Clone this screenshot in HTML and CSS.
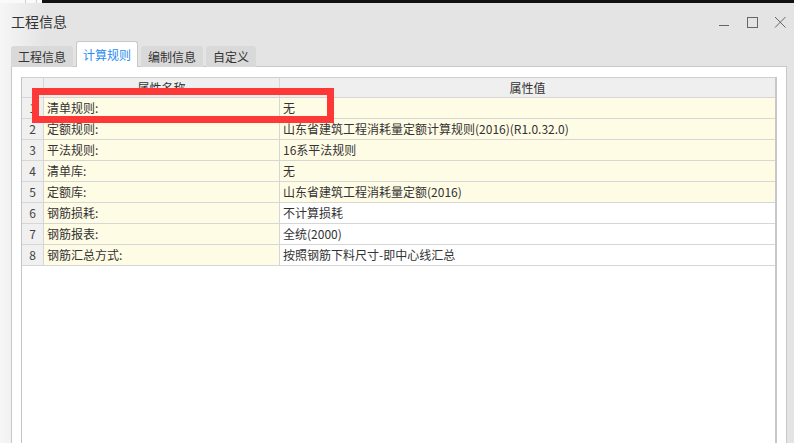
FILE: index.html
```html
<!DOCTYPE html>
<html lang="zh">
<head>
<meta charset="utf-8">
<link rel="stylesheet" href="styles.css">
</head>
<body>
<div class="window">
  <div class="topstrip"><div class="ts-left"><span class="ts-line l1"></span><span class="ts-line l2"></span></div><div class="ts-right"></div></div>
  <div class="titlebar">
    <div class="title">工程信息</div>
    <div class="controls">
      <svg class="ctl" width="12" height="12" viewBox="0 0 12 12"><path d="M1 9.5H11" stroke="#666" stroke-width="1" fill="none"/></svg>
      <svg class="ctl" width="12" height="12" viewBox="0 0 12 12"><rect x="1.5" y="1.5" width="10" height="10" stroke="#666" stroke-width="1" fill="none"/></svg>
      <svg class="ctl" width="12" height="12" viewBox="0 0 12 12"><path d="M1 1L11.5 11.5M11.5 1L1 11.5" stroke="#666" stroke-width="1" fill="none"/></svg>
    </div>
  </div>
  <div class="tabs">
    <div class="tab">工程信息</div>
    <div class="tab active">计算规则</div>
    <div class="tab">编制信息</div>
    <div class="tab">自定义</div>
  </div>
  <div class="panel">
    <div class="grid">
      <div class="row head">
        <div class="c num"></div>
        <div class="c name center">属性名称</div>
        <div class="c val center">属性值</div>
      </div>
      <div class="row y"><div class="c num">1</div><div class="c name">清单规则:</div><div class="c val">无</div></div>
      <div class="row y"><div class="c num">2</div><div class="c name">定额规则:</div><div class="c val">山东省建筑工程消耗量定额计算规则(2016)(R1.0.32.0)</div></div>
      <div class="row y"><div class="c num">3</div><div class="c name">平法规则:</div><div class="c val">16系平法规则</div></div>
      <div class="row y"><div class="c num">4</div><div class="c name">清单库:</div><div class="c val">无</div></div>
      <div class="row y"><div class="c num">5</div><div class="c name">定额库:</div><div class="c val">山东省建筑工程消耗量定额(2016)</div></div>
      <div class="row"><div class="c num">6</div><div class="c name">钢筋损耗:</div><div class="c val">不计算损耗</div></div>
      <div class="row"><div class="c num">7</div><div class="c name">钢筋报表:</div><div class="c val">全统(2000)</div></div>
      <div class="row"><div class="c num">8</div><div class="c name">钢筋汇总方式:</div><div class="c val">按照钢筋下料尺寸-即中心线汇总</div></div>
    </div>
  </div>
  <div class="highlight"></div>
</div>
</body>
</html>
```
FILE: styles.css
```css
* { box-sizing: border-box; }
html, body { margin: 0; padding: 0; }
body {
  width: 794px;
  height: 443px;
  overflow: hidden;
  font-family: "Noto Sans CJK SC", "Noto Sans", sans-serif;
  color: #333;
}
.window {
  position: relative;
  height: 443px;
  background: linear-gradient(to right, #f6f6f6 0px, #e4e4e4 45px, #e4e4e4 100%);
  display: flex;
  flex-direction: column;
}
.topstrip {
  height: 3px;
  display: flex;
  flex: none;
}
.ts-left {
  width: 42px;
  background: #fafafa;
  position: relative;
}
.ts-line {
  position: absolute;
  top: 0;
  width: 1px;
  height: 3px;
  background: #d0d0d0;
}
.l1 { left: 25px; }
.l2 { left: 36px; }
.ts-right { flex: 1; background: #111; }
.titlebar {
  height: 39px;
  flex: none;
  display: flex;
  align-items: center;
  justify-content: space-between;
  padding: 0 8px 0 11px;
}
.title {
  font-size: 14px;
  line-height: 16px;
  color: #333;
  margin-top: -3px;
}
.controls {
  display: flex;
  gap: 16px;
  margin-top: -2px;
}
.ctl { display: block; }
.tabs {
  display: flex;
  align-items: flex-end;
  gap: 3px;
  padding-left: 11px;
  height: 25px;
  flex: none;
  position: relative;
  z-index: 2;
  margin-bottom: -1px;
}
.tab {
  height: 21px;
  padding: 0 7px;
  font-size: 12px;
  line-height: 21px;
  background: #d9d9d9;
  color: #333;
  border-radius: 3px 3px 0 0;
}
.tab.active {
  height: 26px;
  line-height: 25px;
  background: #fff;
  color: #2a8cf0;
  border: 1px solid #c8c8c8;
  border-bottom: none;
  padding: 0 6px;
}
.panel {
  flex: 1;
  margin: 0 7px 0 11px;
  background: #fff;
  border: 1px solid #c8c8c8;
  border-bottom: none;
  padding: 10px 9px 0 9px;
  display: flex;
}
.grid {
  flex: 1;
  border-left: 1px solid #c4c4c4;
  border-right: 2px solid #c8c8c8;
  display: flex;
  flex-direction: column;
}
.row {
  display: grid;
  grid-template-columns: 22px 236px 1fr;
  height: 21px;
  flex: none;
  border-bottom: 1px solid #d6d6d6;
  font-size: 12px;
  line-height: 20px;
}
.row.head {
  height: 21px;
  border-top: 1px solid #d0d0d0;
  background: #efefef;
}
.c {
  border-right: 1px solid #d6d6d6;
  padding-left: 3px;
  white-space: nowrap;
  overflow: hidden;
}
.c.val { border-right: none; }
.c.num {
  background: #f0f0f0;
  text-align: center;
  padding-left: 0;
  color: #444;
}
.center { text-align: center; padding-left: 0; }
.row .name { background: #fffce6; }
.row.y .val { background: #fffce6; }
.row.head .name, .row.head .val { background: #efefef; }
.highlight {
  position: absolute;
  left: 32px;
  top: 88px;
  width: 302px;
  height: 35px;
  border: 7px solid #fe3737;
}
```
